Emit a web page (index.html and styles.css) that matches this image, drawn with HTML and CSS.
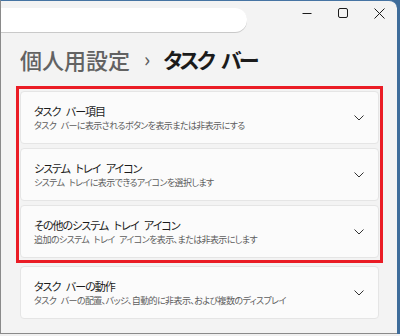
FILE: index.html
```html
<!DOCTYPE html>
<html lang="ja">
<head>
  <meta charset="UTF-8">
  <title>タスク バー</title>
  <link rel="stylesheet" href="styles.css">
</head>
<body>
  <div class="desk">
    <div class="window">
      <!-- Barra de título -->
      <div class="titlebar">
        <div class="search"></div>
        <div class="controls">
          <span class="ctl">
            <svg width="10" height="10" viewBox="0 0 10 10"><path d="M0.5 5.5H9.5" stroke="#1b1b1b" stroke-width="1"/></svg>
          </span>
          <span class="ctl">
            <svg width="10" height="10" viewBox="0 0 10 10"><rect x="0.5" y="0.5" width="9" height="9" rx="1.5" fill="none" stroke="#1b1b1b" stroke-width="1"/></svg>
          </span>
          <span class="ctl">
            <svg width="11" height="11" viewBox="0 0 11 11"><path d="M0.5 0.5L10.5 10.5M10.5 0.5L0.5 10.5" stroke="#1b1b1b" stroke-width="1"/></svg>
          </span>
        </div>
      </div>

      <h1 class="crumb">
        <span class="parent">個人用設定</span>
        <span class="sep">›</span>
        <span class="current">タスク バー</span>
      </h1>

      <div class="list">
        <div class="highlight">
          <div class="card">
            <div class="text">
              <div class="title">タスク バー項目</div>
              <div class="sub">タスク バーに表示されるボタンを表示または非表示にする</div>
            </div>
            <svg class="chev" width="10" height="6" viewBox="0 0 10 6"><path d="M0.5 0.5L5 5L9.5 0.5" fill="none" stroke="#333" stroke-width="1"/></svg>
          </div>
          <div class="card">
            <div class="text">
              <div class="title">システム トレイ アイコン</div>
              <div class="sub">システム トレイに表示できるアイコンを選択します</div>
            </div>
            <svg class="chev" width="10" height="6" viewBox="0 0 10 6"><path d="M0.5 0.5L5 5L9.5 0.5" fill="none" stroke="#333" stroke-width="1"/></svg>
          </div>
          <div class="card">
            <div class="text">
              <div class="title">その他のシステム トレイ アイコン</div>
              <div class="sub">追加のシステム トレイ アイコンを表示、または非表示にします</div>
            </div>
            <svg class="chev" width="10" height="6" viewBox="0 0 10 6"><path d="M0.5 0.5L5 5L9.5 0.5" fill="none" stroke="#333" stroke-width="1"/></svg>
          </div>
        </div>
        <div class="card last">
          <div class="text">
            <div class="title">タスク バーの動作</div>
            <div class="sub">タスク バーの配置、バッジ、自動的に非表示、および複数のディスプレイ</div>
          </div>
          <svg class="chev" width="10" height="6" viewBox="0 0 10 6"><path d="M0.5 0.5L5 5L9.5 0.5" fill="none" stroke="#333" stroke-width="1"/></svg>
        </div>
      </div>
    </div>
  </div>
</body>
</html>
```

FILE: styles.css
```css
html, body {
  margin: 0;
  padding: 0;
  background: #f0f0f0;
}
body {
  font-family: "Noto Sans CJK JP", "Noto Sans", sans-serif;
  font-feature-settings: "palt";
  color: #1b1b1b;
}
.desk {
  width: 400px;
  height: 334px;
  background: #3e6c9a; /* escritorio azul */
}
.window {
  width: 396px;
  height: 332px;
  background: #f3f3f3;
  border-top: 1px solid #4674a3;
  border-left: 1px solid #8a8a8a;
  border-bottom: 1px solid #8a8a8a;
  border-top-right-radius: 8px;
  overflow: hidden;
}
.titlebar {
  display: flex;
  justify-content: space-between;
  height: 32px;
}
.search {
  width: 260px;
  height: 24px;
  margin-top: 7px;
  margin-left: -14px;
  background: #fff;
  border-radius: 12px;
  box-shadow: 0 1px 0 #c9c9c9;
}
.controls {
  display: flex;
}
.ctl {
  width: 36px;
  height: 24px;
  display: flex;
  align-items: center;
  justify-content: center;
}
.crumb {
  margin: 11px 0 0 19px;
  height: 30px;
  line-height: 30px;
  font-size: 22px;
  font-weight: 500;
  white-space: nowrap;
  display: flex;
  align-items: center;
}
.parent {
  color: #626262;
}
.sep {
  color: #5f5f5f;
  font-size: 20px;
  margin: 0 13px 0 14px;
}
.current {
  font-size: 21px;
  font-weight: 700;
  letter-spacing: -2.7px;
  word-spacing: 6px;
  color: #1b1b1b;
}
.list {
  margin-top: 12px;
  padding: 0 14px 0 15px;
}
.highlight {
  border: 3px solid #ea1c25;
  padding: 2px 1px;
  display: flex;
  flex-direction: column;
  gap: 4px;
}
.card {
  height: 53px;
  box-sizing: border-box;
  background: #fbfbfb;
  border: 1px solid #e5e5e5;
  border-radius: 4px;
  padding: 1px 14px 0 13px;
  display: flex;
  align-items: center;
  justify-content: space-between;
}
.card.last {
  margin: 3px 4px 0;
}
.title {
  font-size: 11px;
  line-height: 16px;
  letter-spacing: -1px;
  word-spacing: 4px;
  color: #1b1b1b;
}
.sub {
  font-size: 9px;
  line-height: 14px;
  letter-spacing: -0.6px;
  word-spacing: 3px;
  color: #5d5d5d;
}
.chev {
  flex-shrink: 0;
}
```
